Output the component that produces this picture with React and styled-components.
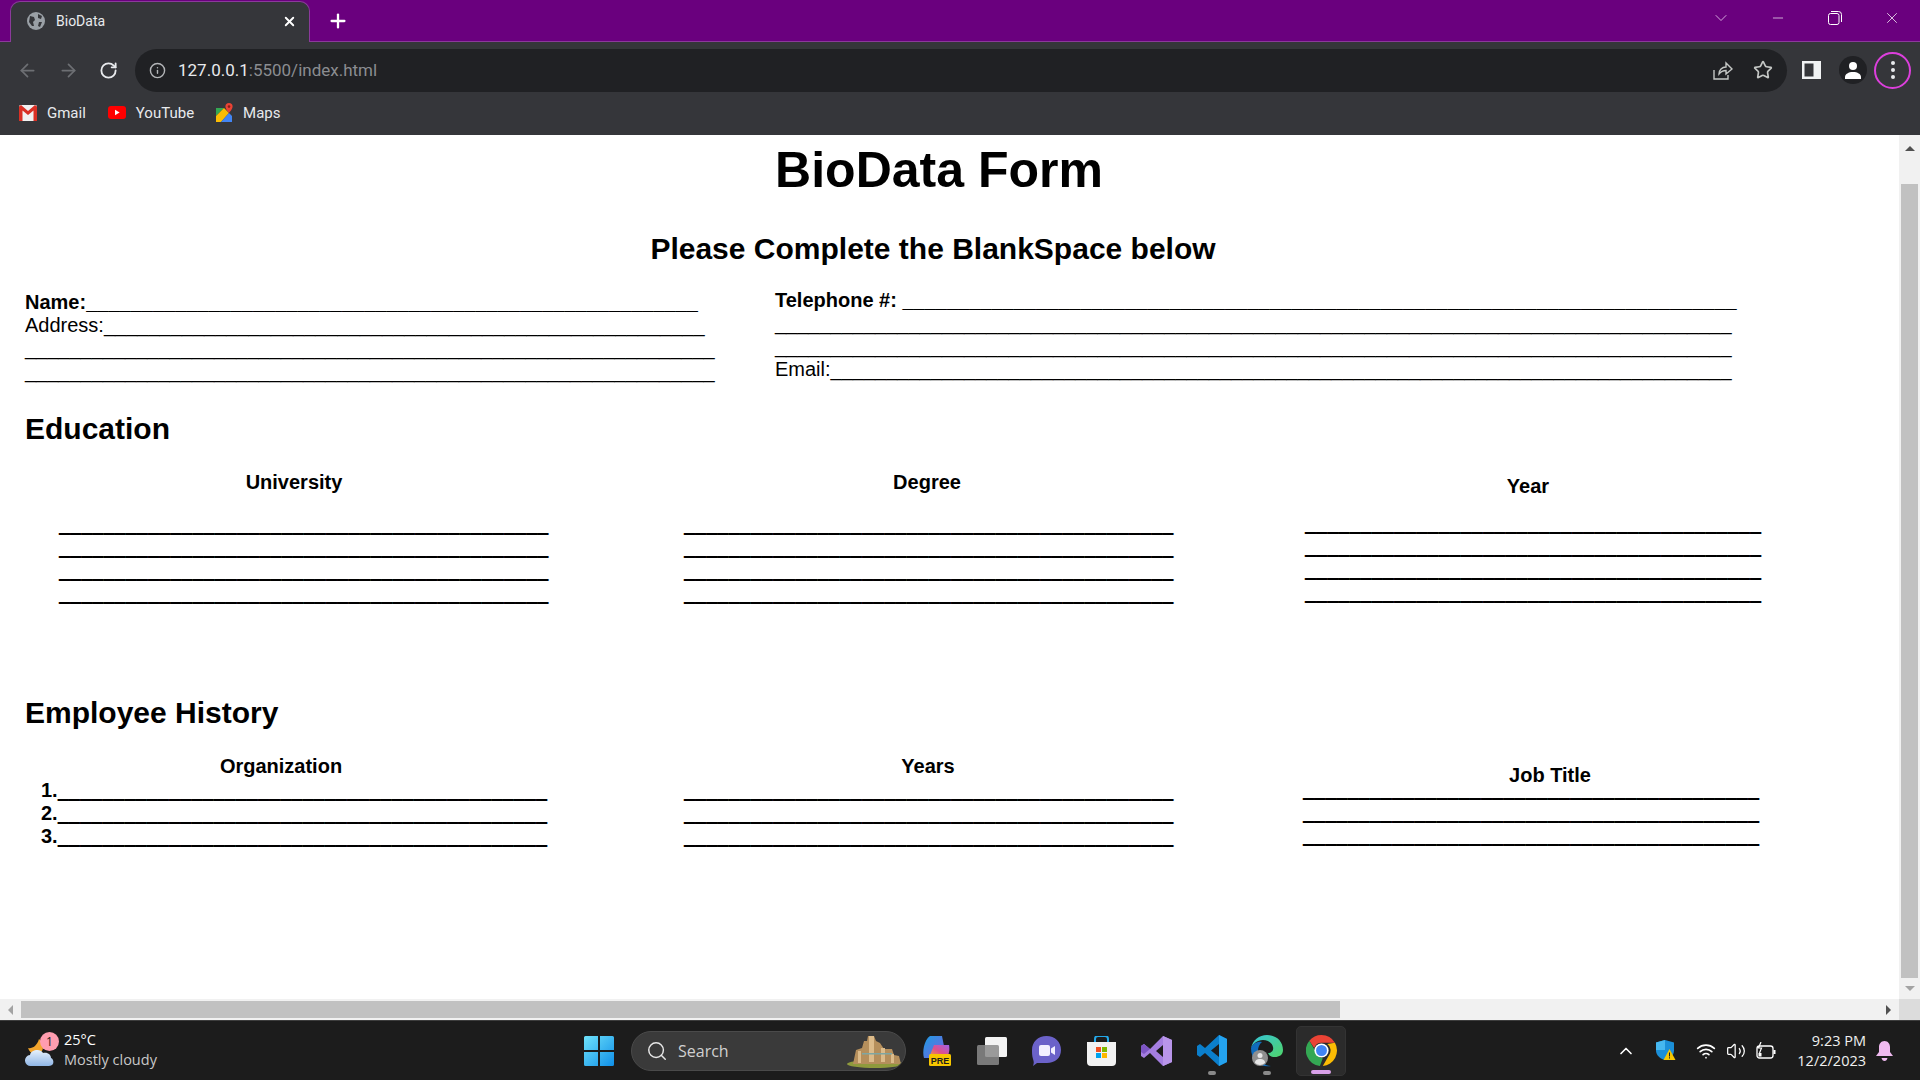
import React from "react"
import styled, { createGlobalStyle } from "styled-components"
import { ArrowLeft, ArrowRight, RotateCw, Info, Star, Plus, X, Minus, ChevronDown, ChevronUp, Search, Wifi, Volume2 } from "lucide-react"

const GlobalStyle = createGlobalStyle`
  html, body { margin: 0; padding: 0; height: 100%; overflow: hidden; background: #fff; }
  #root { height: 100%; }
`

const Blank = ({ n, heavy }) => <Underscores $heavy={heavy}>{"_".repeat(n)}</Underscores>

const Globe = () => (
  <svg width="18" height="18" viewBox="0 0 18 18">
    <circle cx="9" cy="9" r="9" fill="#9aa0a6" />
    <path d="M3 4l4 1 1 3-2 2 1 4-2 0-3-4zM11 2l4 2-1 3-3-1zM12 10l3 0-2 5-2-1z" fill="#35363a" />
  </svg>
)

const GmailIcon = () => (
  <svg width="18" height="16" viewBox="0 0 18 16">
    <rect y="0" width="18" height="16" rx="1.5" fill="#f1f1f1" />
    <path d="M0 1.5V16h3.5V5.5L9 10l5.5-4.5V16H18V1.5L16 0 9 6 2 0z" fill="#d93025" />
  </svg>
)

const YoutubeIcon = () => (
  <svg width="18" height="13" viewBox="0 0 18 13">
    <rect width="18" height="13" rx="3" fill="#f00" />
    <path d="M7 3.8v5.4l4.6-2.7z" fill="#fff" />
  </svg>
)

const MapsIcon = () => (
  <svg width="17" height="20" viewBox="0 0 17 20">
    <path d="M0 5h8l-8 8z" fill="#34a853" />
    <path d="M0 13l8-8 5 5-8 9H0z" fill="#fbbc04" />
    <path d="M5 19l8-9 3 3v6z" fill="#4285f4" />
    <path d="M13 0a3.6 3.6 0 0 1 3.6 3.6c0 2.6-3.6 6.4-3.6 6.4S9.4 6.200 9.400 3.600A3.600 3.600 0 0 1 13 0z" fill="#ea4335" />
    <circle cx="13" cy="3.600" r="1.300" fill="#8a1f17" />
  </svg>
)

const ShareIcon = () => (
  <svg width="20" height="19" viewBox="0 0 20 19" fill="none" stroke="#c4c7c5" strokeWidth="1.400">
    <path d="M1 9v9h14v-4" />
    <path d="M6 13c0-4 3-7 7-7V2l6 6-6 5V9.500c-3 0-5 1-7 3.500z" />
  </svg>
)

const PanelIcon = () => (
  <svg width="19" height="18" viewBox="0 0 19 18">
    <rect width="19" height="18" fill="#f1f3f4" />
    <rect x="2.500" y="2.500" width="9" height="13" fill="#35363a" />
  </svg>
)

const AvatarIcon = () => (
  <svg width="18" height="18" viewBox="0 0 18 18" fill="#fff">
    <circle cx="9" cy="5" r="4" />
    <path d="M1 18v-2c0-3 3.500-5 8-5s8 2 8 5v2z" />
  </svg>
)

const RestoreIcon = () => (
  <svg width="14" height="14" viewBox="0 0 14 14" fill="none" stroke="#fff" strokeWidth="1">
    <rect x="0.500" y="2.500" width="10.500" height="11" rx="2" />
    <path d="M3 .500h7.500a3 3 0 0 1 3 3V11" />
  </svg>
)

const WeatherIcon = () => (
  <svg width="30" height="34" viewBox="0 0 30 34">
    <defs>
      <linearGradient id="cloud" x1="0" y1="0" x2="0" y2="1">
        <stop offset="0" stopColor="#e6f0fb" />
        <stop offset="1" stopColor="#8fb6e6" />
      </linearGradient>
    </defs>
    <path d="M3 14c4 1 9-2 11-9 4 3 5 8 3 12l-9 3C6 19 4 17 3 14z" fill="#f3a52c" />
    <path d="M6 32a5.500 5.500 0 0 1-1-11c1-5 10-7 13-2 5-1 8 2 8 5 3 1 4 8-2 8z" fill="url(#cloud)" />
  </svg>
)

const WindowsIcon = () => (
  <svg width="30" height="30" viewBox="0 0 30 30">
    <defs>
      <linearGradient id="win" x1="0" y1="0" x2="1" y2="1">
        <stop offset="0" stopColor="#6fe2fa" />
        <stop offset="1" stopColor="#0f8fe8" />
      </linearGradient>
    </defs>
    <path d="M0 1.500A1.500 1.500 0 0 1 1.500 0H14v14H0zM16 0h12.500A1.500 1.500 0 0 1 30 1.500V14H16zM0 16h14v14H1.500A1.500 1.500 0 0 1 0 28.500zM16 16h14v12.500a1.500 1.500 0 0 1-1.500 1.500H16z" fill="url(#win)" />
  </svg>
)

const CastleIcon = () => (
  <svg width="60" height="34" viewBox="0 0 60 34">
    <ellipse cx="30" cy="30" rx="28" ry="4" fill="#8f9a3d" />
    <path d="M8 30l3-14 6-2 2-7 3 0 1-5 6 0 2 5 4 2 4 6 8 0 2 6 5 1 2 8z" fill="#b58f5c" />
    <path d="M24 2h5v26h-5zM36 14h4v14h-4zM46 20h3v9h-3zM13 17h3v12h-3z" fill="#dcbb8a" />
    <path d="M17 19h30v1.500H17z" fill="#7ea7a4" />
  </svg>
)

const CopilotIcon = () => (
  <svg width="30" height="30" viewBox="0 0 30 30">
    <defs>
      <linearGradient id="cop1" x1="0" y1="0" x2="1" y2="1">
        <stop offset="0" stopColor="#1b9de2" />
        <stop offset="1" stopColor="#7a5fe0" />
      </linearGradient>
      <linearGradient id="cop2" x1="0" y1="1" x2="1" y2="0">
        <stop offset="0" stopColor="#f0b030" />
        <stop offset="0.500" stopColor="#e0508a" />
        <stop offset="1" stopColor="#a060e8" />
      </linearGradient>
    </defs>
    <path d="M8 0h12l2 10-9 2-4 10H2C0 16 2 4 8 0z" fill="url(#cop1)" />
    <path d="M12 9h15c1 5 0 10-3 13H7z" fill="url(#cop2)" />
    <rect x="7" y="18" width="22" height="12" rx="1.500" fill="#f7c600" />
    <text x="18" y="28" fontFamily="Liberation Sans, sans-serif" fontSize="9" fontWeight="700" textAnchor="middle" fill="#1c1c1c">PRE</text>
  </svg>
)

const TaskViewIcon = () => (
  <svg width="30" height="28" viewBox="0 0 30 28">
    <rect x="8" y="0" width="22" height="20" rx="1.500" fill="#f3f3f3" />
    <rect x="0" y="8" width="22" height="20" rx="1.500" fill="#8a8a8a" fillOpacity="0.850" />
  </svg>
)

const MeetIcon = () => (
  <svg width="29" height="30" viewBox="0 0 29 30">
    <path d="M14.500 0C23 0 29 6 29 14c0 8-6 13-14 13H5l-4 3c1-3 1-4 0-7-1-3-1-6-1-9C0 6 6 0 14.500 0z" fill="#6b62c9" />
    <rect x="7" y="9" width="11" height="11" rx="2" fill="#f2f0ff" />
    <path d="M19 12.500l4-2.500v9l-4-2.500z" fill="#f2f0ff" />
  </svg>
)

const StoreIcon = () => (
  <svg width="29" height="30" viewBox="0 0 29 30">
    <path d="M8 7V3a3 3 0 0 1 3-3h7a3 3 0 0 1 3 3v4" fill="none" stroke="#23a7e8" strokeWidth="2" />
    <path d="M0 6h29v20a4 4 0 0 1-4 4H4a4 4 0 0 1-4-4z" fill="#f2f2f2" />
    <rect x="9" y="11" width="5" height="5" fill="#f25022" />
    <rect x="15" y="11" width="5" height="5" fill="#7fba00" />
    <rect x="9" y="17" width="5" height="5" fill="#00a4ef" />
    <rect x="15" y="17" width="5" height="5" fill="#ffb900" />
  </svg>
)

const VisualStudioIcon = () => (
  <svg width="31" height="30" viewBox="0 0 31 30">
    <path d="M22 0l9 4v22l-9 4-13-13-6 5-3-2V10l3-2 6 5zM22 9l-7 6 7 6z" fill="#a47ee0" />
    <path d="M22 0l9 4v22l-9 4z" fill="#b995ea" />
    <path d="M3 8l6 5-6 5 0 0-3-2V10z" fill="#7d56c4" />
  </svg>
)

const VscodeIcon = () => (
  <svg width="30" height="31" viewBox="0 0 30 31">
    <path d="M22 0l8 4v23l-8 4L8 18l-5 4-3-2v-9l3-2 5 4zM22 9l-8 6.500 8 6.500z" fill="#0b7fcc" />
    <path d="M22 0l8 4v23l-8 4z" fill="#24a3ef" />
  </svg>
)

const EdgeIcon = () => (
  <svg width="32" height="32" viewBox="0 0 32 32">
    <defs>
      <linearGradient id="edge" x1="0" y1="0" x2="1" y2="1">
        <stop offset="0" stopColor="#36c5d8" />
        <stop offset="1" stopColor="#4fd46a" />
      </linearGradient>
    </defs>
    <path d="M16 0c9 0 16 6 16 15 0 5-4 7-8 7-5 0-6-2-7-4 3 0 6-2 5-6-1-5-6-7-10-7-6 0-10 4-12 8C2 5 8 0 16 0z" fill="url(#edge)" />
    <path d="M0 13c2-5 7-7 11-6-4 3-5 9-3 15 1 4 6 9 12 9C9 33 0 25 0 13z" fill="#0f6cbd" />
    <circle cx="9" cy="23" r="8" fill="#8f8f8f" />
    <circle cx="9" cy="20.500" r="2.500" fill="#e6e6e6" />
    <path d="M4 28c0-3 2-4 5-4s5 1 5 4a8 8 0 0 1-10 0z" fill="#e6e6e6" />
  </svg>
)

const ChromeIcon = () => (
  <svg width="31" height="31" viewBox="0 0 48 48">
    <path d="M24 0a24 24 0 0 1 20.800 12H24a12 12 0 0 0-11.300 8L5.200 9A24 24 0 0 1 24 0z" fill="#ea4335" />
    <path d="M44.800 12A24 24 0 0 1 26 47.900l10-17.500A12 12 0 0 0 33 14z" fill="#fbbc04" />
    <path d="M5.200 9l10.500 18a12 12 0 0 0 10.300 9l-4.500 11.900A24 24 0 0 1 5.200 9z" fill="#34a853" />
    <circle cx="24" cy="24" r="11" fill="#fff" />
    <circle cx="24" cy="24" r="8.500" fill="#4285f4" />
  </svg>
)

const ShieldIcon = () => (
  <svg width="20" height="21" viewBox="0 0 20 21">
    <path d="M9 0l9 2.500v8C18 15 14 19 9 20c-5-1-9-5-9-9.500v-8z" fill="#1b8fd8" />
    <path d="M9 0v10H0v.500V2.500z" fill="#46b8f0" />
    <path d="M13.500 9l6 11h-12z" fill="#f7c600" />
    <path d="M13 12.500h1v4h-1zM13 17.200h1v1.200h-1z" fill="#1c1c1c" />
  </svg>
)

const BatteryIcon = () => (
  <svg width="20" height="18" viewBox="0 0 20 18" fill="none" stroke="#fff" strokeWidth="1.300">
    <rect x="1" y="4" width="16" height="12" rx="2.500" />
    <path d="M18.500 8v4" strokeWidth="2" />
    <path d="M5 0L2.500 6h3L3.500 11" strokeWidth="1.200" />
    <rect x="2.500" y="11" width="3" height="3.500" fill="#fff" stroke="none" />
  </svg>
)

const BellIcon = () => (
  <svg width="17" height="20" viewBox="0 0 17 20" fill="#efb9ef">
    <path d="M8.500 0C12 0 14 3 14 6v5l3 4H0l3-4V6c0-3 2-6 5.500-6z" />
    <path d="M5.500 17h6c-.500 2-1.500 3-3 3s-2.500-1-3-3z" />
  </svg>
)

const HeavyLines = ({ count, n }) =>
  Array.from({ length: count }, (_, i) => <Blank key={i} n={n} heavy />)

const App = () => (
  <Screen>
    <GlobalStyle />
    <TabStrip>
      <Tab>
        <Globe />
        <TabTitle>BioData</TabTitle>
        <X size={15} strokeWidth={3} color="#fff" />
      </Tab>
      <NewTab><Plus size={22} strokeWidth={2.5} color="#fff" /></NewTab>
      <WindowControls>
        <TabSearch><ChevronDown size={20} strokeWidth={1} color="#e8c8ee" /></TabSearch>
        <ControlSlot><Minus size={16} strokeWidth={1} color="#fff" /></ControlSlot>
        <ControlSlot><RestoreIcon /></ControlSlot>
        <ControlSlot><X size={18} strokeWidth={1} color="#fff" /></ControlSlot>
      </WindowControls>
    </TabStrip>
    <Toolbar>
      <NavIcons>
        <ArrowLeft size={21} strokeWidth={2} color="#6d6f73" />
        <ArrowRight size={21} strokeWidth={2} color="#6d6f73" />
        <RotateCw size={19} strokeWidth={2.3} color="#e8eaed" />
      </NavIcons>
      <AddressBar>
        <Info size={17} strokeWidth={2} color="#b4b6b9" />
        <Url>127.0.0.1<UrlRest>:5500/index.html</UrlRest></Url>
        <AddressActions>
          <ShareIcon />
          <Star size={20} strokeWidth={2} color="#c4c7c5" />
        </AddressActions>
      </AddressBar>
      <PanelIcon />
      <AvatarCircle><AvatarIcon /></AvatarCircle>
      <MenuRing><MenuDot /><MenuDot /><MenuDot /></MenuRing>
    </Toolbar>
    <Bookmarks>
      <Bookmark><GmailIcon />Gmail</Bookmark>
      <Bookmark><YoutubeIcon />YouTube</Bookmark>
      <Bookmark><MapsIcon />Maps</Bookmark>
    </Bookmarks>

    <Viewport>
      <PageColumn>
        <Page>
          <Title>BioData Form</Title>
          <Subtitle>Please Complete the BlankSpace below</Subtitle>
          <ContactGrid>
            <ContactColumn>
              <strong>Name:<Blank n={55} /></strong>
              <div>Address:<Blank n={54} /></div>
              <div><Blank n={62} /></div>
              <div><Blank n={62} /></div>
            </ContactColumn>
            <ContactColumn $raised>
              <strong>Telephone #: <Blank n={75} /></strong>
              <div><Blank n={86} /></div>
              <div><Blank n={86} /></div>
              <div>Email:<Blank n={81} /></div>
            </ContactColumn>
          </ContactGrid>

          <SectionTitle $top={29}>Education</SectionTitle>
          <ColumnGrid>
            <Column>
              <ColumnHead $w={538}>University</ColumnHead>
              <Lines $top={19} $left={34}><HeavyLines count={4} n={44} /></Lines>
            </Column>
            <Column>
              <ColumnHead $w={486}>Degree</ColumnHead>
              <Lines $top={19}><HeavyLines count={4} n={44} /></Lines>
            </Column>
            <Column>
              <ColumnHead $w={446} $down={4}>Year</ColumnHead>
              <Lines $top={14}><HeavyLines count={4} n={41} /></Lines>
            </Column>
          </ColumnGrid>

          <SectionTitle $top={91}>Employee History</SectionTitle>
          <ColumnGrid>
            <Column>
              <ColumnHead $w={512}>Organization</ColumnHead>
              <Lines $top={1} $left={16}>
                <span>1.<Blank n={44} heavy /></span>
                <span>2.<Blank n={44} heavy /></span>
                <span>3.<Blank n={44} heavy /></span>
              </Lines>
            </Column>
            <Column>
              <ColumnHead $w={488}>Years</ColumnHead>
              <Lines $top={1}><HeavyLines count={3} n={44} /></Lines>
            </Column>
            <Column $shift={-2}>
              <ColumnHead $w={494} $down={9}>Job Title</ColumnHead>
              <Lines $top={-9}><HeavyLines count={3} n={41} /></Lines>
            </Column>
          </ColumnGrid>
        </Page>
        <HorizontalBar>
          <ArrowSlot $w={21} $h={21}><Triangle $dir="left" $soft /></ArrowSlot>
          <HorizontalTrack><HorizontalThumb /></HorizontalTrack>
          <ArrowSlot $w={21} $h={21}><Triangle $dir="right" /></ArrowSlot>
        </HorizontalBar>
      </PageColumn>
      <VerticalBar>
        <ArrowSlot $w={21} $h={26}><Triangle $dir="up" /></ArrowSlot>
        <VerticalTrack><VerticalThumb /></VerticalTrack>
        <ArrowSlot $w={21} $h={21}><Triangle $dir="down" $soft /></ArrowSlot>
        <Corner />
      </VerticalBar>
    </Viewport>

    <Taskbar>
      <WeatherWidget>
        <WeatherArt>
          <WeatherIcon />
          <WeatherBadge>1</WeatherBadge>
        </WeatherArt>
        <WeatherText>
          <span>25°C</span>
          <WeatherNote>Mostly cloudy</WeatherNote>
        </WeatherText>
      </WeatherWidget>
      <TaskCenter>
        <WindowsIcon />
        <SearchPill>
          <Search size={22} strokeWidth={1.600} color="#e6e6e6" />
          <SearchLabel>Search</SearchLabel>
          <CastleIcon />
        </SearchPill>
        <AppSlot><CopilotIcon /></AppSlot>
        <AppSlot><TaskViewIcon /></AppSlot>
        <AppSlot><MeetIcon /></AppSlot>
        <AppSlot><StoreIcon /></AppSlot>
        <AppSlot><VisualStudioIcon /></AppSlot>
        <AppSlot $running><VscodeIcon /></AppSlot>
        <AppSlot $running><EdgeIcon /></AppSlot>
        <AppSlot $active><ChromeIcon /></AppSlot>
      </TaskCenter>
      <Tray>
        <ChevronUp size={20} strokeWidth={2} color="#fff" />
        <ShieldSlot><ShieldIcon /></ShieldSlot>
        <Wifi size={20} strokeWidth={2} color="#fff" />
        <Volume2 size={20} strokeWidth={1.500} color="#fff" />
        <BatteryIcon />
        <Clock>
          <span>9:23 PM</span>
          <span>12/2/2023</span>
        </Clock>
        <BellIcon />
      </Tray>
    </Taskbar>
  </Screen>
)

const Screen = styled.div`
  width: 1920px;
  height: 1080px;
  display: flex;
  flex-direction: column;
  overflow: hidden;
  font-family: "Liberation Sans", Arial, sans-serif;
`

const TabStrip = styled.div`
  height: 42px;
  flex: none;
  box-sizing: border-box;
  display: flex;
  align-items: flex-end;
  padding-left: 10px;
  background: #6a007e;
  border-bottom: 1px solid #8b3a9b;
`

const Tab = styled.div`
  width: 300px;
  height: 41px;
  margin-bottom: -1px;
  box-sizing: border-box;
  display: flex;
  align-items: center;
  padding: 0 12px 2px 16px;
  background: #35363a;
  border-radius: 10px 10px 0 0;
  border: 1px solid #8b3a9b;
  border-bottom: none;
`

const TabTitle = styled.span`
  flex: 1;
  margin-left: 11px;
  font: 14px Roboto, sans-serif;
  color: #e8eaed;
`

const NewTab = styled.div`
  width: 56px;
  height: 41px;
  display: flex;
  align-items: center;
  justify-content: center;
`

const WindowControls = styled.div`
  margin-left: auto;
  height: 41px;
  display: flex;
  align-items: center;
  padding: 0 0 6px;
  box-sizing: border-box;
`

const TabSearch = styled.div`
  display: flex;
  margin-right: 18px;
`

const ControlSlot = styled.div`
  width: 57px;
  display: flex;
  justify-content: center;
`

const Toolbar = styled.div`
  height: 50px;
  flex: none;
  box-sizing: border-box;
  display: flex;
  align-items: center;
  padding: 6px 9px 0 17px;
  gap: 0;
  background: #35363a;

  & > svg { margin-left: 15px; }
`

const NavIcons = styled.div`
  width: 118px;
  display: flex;
  align-items: center;
  gap: 20px;
`

const AddressBar = styled.div`
  flex: 1;
  height: 43px;
  display: flex;
  align-items: center;
  padding: 0 14px 0 14px;
  border-radius: 22px;
  background: #202124;
`

const Url = styled.span`
  margin-left: 12px;
  font: 17px Roboto, sans-serif;
  color: #e8eaed;
`

const UrlRest = styled.span`
  color: #8b8d91;
`

const AddressActions = styled.div`
  margin-left: auto;
  display: flex;
  align-items: center;
  gap: 20px;
`

const AvatarCircle = styled.div`
  width: 28px;
  height: 28px;
  margin-left: 18px;
  display: flex;
  align-items: center;
  justify-content: center;
  border-radius: 50%;
  background: #202124;
`

const MenuRing = styled.div`
  width: 37px;
  height: 37px;
  margin-left: 7px;
  box-sizing: border-box;
  display: flex;
  flex-direction: column;
  align-items: center;
  justify-content: center;
  gap: 3px;
  border: 2px solid #dc3fdc;
  border-radius: 50%;
`

const MenuDot = styled.i`
  width: 4px;
  height: 4px;
  border-radius: 50%;
  background: #e8eaed;
`

const Bookmarks = styled.div`
  height: 43px;
  flex: none;
  box-sizing: border-box;
  display: flex;
  align-items: center;
  padding: 0 0 2px 19px;
  gap: 22px;
  background: #35363a;
`

const Bookmark = styled.div`
  display: flex;
  align-items: center;
  gap: 10px;
  font: 15px Roboto, sans-serif;
  color: #e8eaed;
`

const Viewport = styled.div`
  flex: 1;
  min-height: 0;
  display: flex;
  background: #fff;
`

const PageColumn = styled.div`
  flex: 1;
  min-width: 0;
  display: flex;
  flex-direction: column;
`

const Page = styled.main`
  flex: 1;
  min-height: 0;
  overflow: hidden;
  color: #000;
  font-size: 20px;
  padding-top: 7px;
`

const Title = styled.h1`
  margin: 0;
  width: 1878px;
  text-align: center;
  font-size: 50px;
  line-height: 57px;
`

const Subtitle = styled.h2`
  margin: 33px 0 0;
  width: 1866px;
  text-align: center;
  font-size: 30px;
  line-height: 34px;
`

const ContactGrid = styled.section`
  margin-top: 25px;
  padding-left: 25px;
  display: grid;
  grid-template-columns: 750px 1fr;
  white-space: pre;
`

const ContactColumn = styled.div`
  line-height: 23px;
  margin-top: ${(p) => (p.$raised ? "-2px" : "0")};

  strong { display: block; }
`

const Underscores = styled.span`
  text-shadow: ${(p) => (p.$heavy ? "0 1px 0 #000" : "none")};
`

const SectionTitle = styled.h2`
  margin: ${(p) => p.$top}px 0 0;
  padding-left: 25px;
  font-size: 30px;
  line-height: 34px;
`

const ColumnGrid = styled.section`
  margin-top: 25px;
  padding-left: 25px;
  display: grid;
  grid-template-columns: 659px 621px 1fr;
  font-weight: 700;
  white-space: pre;
`

const Column = styled.div`
  margin-left: ${(p) => p.$shift || 0}px;
`

const ColumnHead = styled.h3`
  margin: ${(p) => p.$down || 0}px 0 0;
  width: ${(p) => p.$w}px;
  text-align: center;
  font-size: 20px;
  line-height: 23px;
`

const Lines = styled.div`
  margin: ${(p) => p.$top || 0}px 0 0 ${(p) => p.$left || 0}px;
  display: flex;
  flex-direction: column;
  line-height: 23px;
`

const HorizontalBar = styled.div`
  height: 21px;
  flex: none;
  display: flex;
  align-items: center;
  background: #f1f1f1;
`

const HorizontalTrack = styled.div`
  flex: 1;
  height: 100%;
  display: flex;
  align-items: center;
`

const HorizontalThumb = styled.div`
  width: 1319px;
  height: 17px;
  background: #c1c1c1;
`

const ArrowSlot = styled.span`
  width: ${(p) => p.$w}px;
  height: ${(p) => p.$h}px;
  flex: none;
  display: flex;
  align-items: center;
  justify-content: center;
`

const Triangle = styled.i`
  width: 0;
  height: 0;
  border: 5px solid transparent;
  ${(p) => {
    const color = p.$soft ? "#a3a3a3" : "#505050"
    if (p.$dir === "up") return `border-top: none; border-bottom: 5px solid ${color};`
    if (p.$dir === "down") return `border-bottom: none; border-top: 5px solid ${color};`
    if (p.$dir === "left") return `border-left: none; border-right: 5px solid ${color};`
    return `border-right: none; border-left: 5px solid ${color};`
  }}
`

const VerticalBar = styled.div`
  width: 21px;
  flex: none;
  display: flex;
  flex-direction: column;
  background: #f1f1f1;
`

const VerticalTrack = styled.div`
  flex: 1;
  padding: 23px 2px 0;
`

const VerticalThumb = styled.div`
  height: 794px;
  background: #c1c1c1;
`

const Corner = styled.div`
  height: 21px;
  background: #dcdcdc;
`

const Taskbar = styled.footer`
  height: 60px;
  flex: none;
  box-sizing: border-box;
  display: flex;
  align-items: center;
  border-top: 1px solid #3d3d3d;
  background: #1c1c1c;
  color: #fff;
  font-family: "Open Sans", sans-serif;
`

const WeatherWidget = styled.div`
  width: 584px;
  box-sizing: border-box;
  padding-left: 25px;
  display: flex;
  align-items: center;
  gap: 9px;
`

const WeatherArt = styled.div`
  position: relative;
  width: 30px;
  height: 34px;
`

const WeatherBadge = styled.span`
  position: absolute;
  top: -2px;
  right: -4px;
  width: 19px;
  height: 19px;
  display: flex;
  align-items: center;
  justify-content: center;
  border-radius: 50%;
  background: #ff9db0;
  color: #1c1c1c;
  font-size: 12px;
`

const WeatherText = styled.div`
  display: flex;
  flex-direction: column;
  margin-top: -2px;
  font-size: 14.500px;
  line-height: 20px;
`

const WeatherNote = styled.span`
  color: #c8c8c8;
`

const TaskCenter = styled.div`
  display: flex;
  align-items: center;
  gap: 0;
`

const SearchPill = styled.div`
  width: 275px;
  height: 40px;
  margin: 0 3px 0 17px;
  box-sizing: border-box;
  display: flex;
  align-items: center;
  padding: 0 0 0 14px;
  border: 1px solid #4a4a4a;
  border-radius: 20px;
  background: #3a3a3a;
  overflow: hidden;
`

const SearchLabel = styled.span`
  flex: 1;
  margin-left: 10px;
  font-size: 16px;
  color: #d0d0d0;
`

const AppSlot = styled.div`
  position: relative;
  width: ${(p) => (p.$active ? 50 : 55)}px;
  height: 50px;
  display: flex;
  align-items: center;
  justify-content: center;
  box-sizing: border-box;
  border-radius: 5px;
  ${(p) => p.$active && "background: #2b2b2b; border: 1px solid #333; margin-left: 2px;"}

  &::after {
    content: "";
    display: ${(p) => (p.$running || p.$active ? "block" : "none")};
    position: absolute;
    bottom: 1px;
    left: 50%;
    transform: translateX(-50%);
    width: ${(p) => (p.$active ? 20 : 8)}px;
    height: 4px;
    border-radius: 2px;
    background: ${(p) => (p.$active ? "#d8a0e8" : "#8a8a8a")};
  }
`

const Tray = styled.div`
  margin-left: auto;
  display: flex;
  align-items: center;
  gap: 10px;
  padding-right: 27px;
`

const ShieldSlot = styled.div`
  display: flex;
  margin: 0 10px;
`

const Clock = styled.div`
  margin-left: 11px;
  display: flex;
  flex-direction: column;
  align-items: flex-end;
  font-size: 14.500px;
  line-height: 20px;
  color: #f0f0f0;
`

export default App
